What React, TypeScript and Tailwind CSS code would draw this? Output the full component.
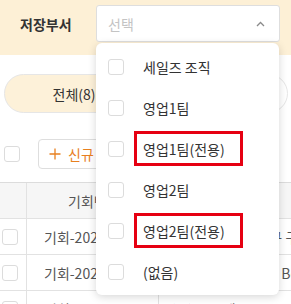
import React from "react";

const options = ["세일즈 조직", "영업1팀", "영업1팀(전용)", "영업2팀", "영업2팀(전용)", "(없음)"];
const marked = ["영업1팀(전용)", "영업2팀(전용)"];

const rows = [
  { id: "기회-2025-0001", name: "[(주)ABC 테크] 신규 구축 기회" },
  { id: "기회-2025-0002", name: "[(주)한빛] 클라우드 Beta - 도입" },
  { id: "기회-2025-0003", name: "[(주)ABC 테크] 교육 프로그램" },
];

const Box = ({ className = "" }: { className?: string }) => (
  <span className={`block w-[16px] h-[16px] rounded-[3px] border border-[#dcdcdc] bg-white ${className}`} />
);

const App = () => {
  return (
    <div className="relative w-[291px] h-[304px] overflow-hidden bg-white font-['Noto_Sans_CJK_KR','Noto_Sans',sans-serif] text-[#333]">
      {/* filter band */}
      <div className="h-[55px] bg-[#fdf0d6] flex items-start pt-[5px]">
        <div className="w-[96px] h-[37px] pl-[20px] flex items-center text-[14px] font-bold leading-none text-[#333]">
          저장부서
        </div>
        <div className="relative w-[184px] h-[37px]">
          <div className="h-full flex items-center justify-between pl-[11px] pr-[14px] bg-white border border-[#dedede] rounded-[3px]">
            <span className="text-[14px] leading-none text-[#c4c4c4]">선택</span>
            <svg width="9" height="6" viewBox="0 0 9 6" fill="none" className="mt-[1px]">
              <path d="M1 5L4.5 1.5L8 5" stroke="#8a8a8a" strokeWidth="1.3" />
            </svg>
          </div>

          {/* dropdown menu */}
          <div className="absolute z-10 top-[38px] left-0 w-[183px] py-[3px] bg-white rounded-[6px] shadow-[0_2px_8px_rgba(0,0,0,0.16)]">
            {options.map((o) => (
              <div key={o} className="relative h-[41px] flex items-center pl-[12px]">
                <Box />
                <span className="ml-[19px] text-[14px] leading-none text-[#333] whitespace-nowrap">{o}</span>
                {marked.includes(o) && (
                  <span className="absolute left-[38px] top-[3px] w-[109px] h-[35px] border-[3px] border-[#e60012]" />
                )}
              </div>
            ))}
          </div>
        </div>
      </div>

      {/* tabs */}
      <div className="mt-[19px] flex gap-[4px] pl-[4px]">
        <div className="shrink-0 w-[140px] h-[39px] rounded-full bg-[#fdf1d9] border border-[#e6e6e6] flex items-center justify-center text-[14px] leading-none text-[#333]">
          전체(8)
        </div>
        <div className="shrink-0 w-[140px] h-[39px] rounded-full bg-white border border-[#e6e6e6] flex items-center justify-center text-[14px] leading-none text-[#333]">
          진행중(5)
        </div>
      </div>

      {/* toolbar */}
      <div className="mt-[26px] h-[30px] flex items-center pl-[4px]">
        <Box className="w-[15px] h-[15px]" />
        <div className="ml-[18px] h-[30px] px-[10px] flex items-center gap-[7px] border border-[#dedede] rounded-[4px] text-[#e8801f] whitespace-nowrap">
          <svg width="12" height="12" viewBox="0 0 12 12" fill="none">
            <path d="M6 0.5V11.5M0.5 6H11.5" stroke="#e8801f" strokeWidth="1.3" />
          </svg>
          <span className="text-[14px] leading-none">신규 등록</span>
        </div>
      </div>

      {/* table */}
      <div className="mt-[13px] w-[400px] border-t border-[#dcdcdc]">
        <div className="flex h-[36px] bg-[#f6f6f6] border-b border-[#e2e2e2] text-[14px] leading-none text-[#555]">
          <div className="w-[27px] border-r border-[#e2e2e2]" />
          <div className="w-[132px] border-r border-[#e2e2e2] flex items-center pl-[41px] whitespace-nowrap">기회번호</div>
          <div className="flex-1 flex items-center pl-[40px]">기회명</div>
        </div>
        {rows.map((r) => (
          <div key={r.id} className="flex h-[36px] border-b border-[#e2e2e2] text-[14px] leading-none text-[#555]">
            <div className="w-[27px] border-r border-[#e2e2e2] flex items-center pl-[2px]">
              <Box className="w-[15px] h-[15px]" />
            </div>
            <div className="w-[132px] border-r border-[#e2e2e2] flex items-center pl-[17px] whitespace-nowrap">{r.id}</div>
            <div className="flex-1 flex items-center pl-[7px] whitespace-nowrap">{r.name}</div>
          </div>
        ))}
      </div>
    </div>
  );
};

export default App;
